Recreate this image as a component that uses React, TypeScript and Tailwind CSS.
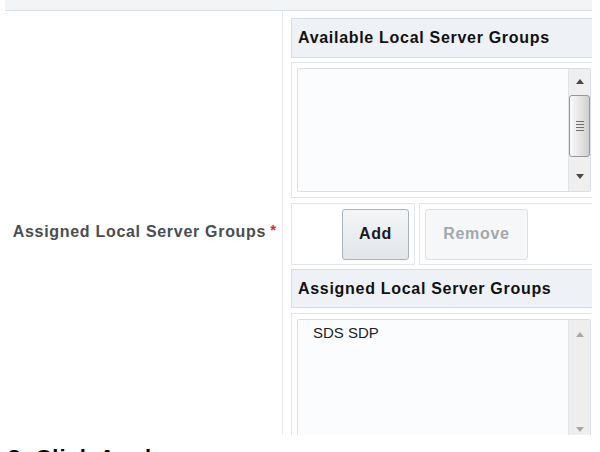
import React from "react";

function Arrow({ dir, color }: { dir: "up" | "down"; color: string }) {
  return (
    <svg width="8" height="5" viewBox="0 0 8 5">
      {dir === "up" ? (
        <polygon points="0,5 8,5 4,0" fill={color} />
      ) : (
        <polygon points="0,0 8,0 4,5" fill={color} />
      )}
    </svg>
  );
}

function ActiveScrollbar() {
  return (
    <div className="w-[22px] h-full bg-[#efefef] border-l border-[#e4e4e4] flex flex-col items-center">
      <div className="h-[24px] flex items-center justify-center pt-[1px]">
        <Arrow dir="up" color="#4a4a4a" />
      </div>
      <div className="mt-[2px] w-[21px] h-[62px] rounded-[3px] border border-[#969696] bg-gradient-to-r from-[#fafafa] via-[#e6e6e6] to-[#cfcfcf] flex flex-col items-center justify-center gap-[2px]">
        <div className="w-[8px] h-[1px] bg-[#707070]" />
        <div className="w-[8px] h-[1px] bg-[#707070]" />
        <div className="w-[8px] h-[1px] bg-[#707070]" />
        <div className="w-[8px] h-[1px] bg-[#707070]" />
      </div>
      <div className="flex-1" />
      <div className="h-[26px] flex items-center justify-center pb-[4px]">
        <Arrow dir="down" color="#4a4a4a" />
      </div>
    </div>
  );
}

function DisabledScrollbar() {
  return (
    <div className="w-[22px] h-full bg-[#eeeeee] border-l border-[#e4e4e4] flex flex-col items-center">
      <div className="h-[26px] flex items-center justify-center pt-[2px]">
        <Arrow dir="up" color="#a8a8a8" />
      </div>
      <div className="flex-1" />
      <div className="h-[26px] flex items-center justify-center">
        <Arrow dir="down" color="#a8a8a8" />
      </div>
    </div>
  );
}

export default function App() {
  const bold = "font-bold text-[16px] tracking-[0.7px]";
  return (
    <div className="w-[600px] h-[452px] bg-white overflow-hidden relative font-['Liberation_Sans',Arial,sans-serif]">
      <div className="ml-[5px] w-[587px] h-[11px] bg-[#f2f4f6] border-b border-[#d8e0e8]" />
      <div className="ml-[5px] w-[587px] h-[424px] overflow-hidden flex">
        <div className="w-[278px] shrink-0 border-r border-[#e6e9ec] flex justify-end items-start pr-[6px] pt-[212px]">
          <span className={`${bold} leading-[18px] text-[#4a4d52]`}>
            Assigned Local Server Groups
          </span>
          <span className="text-[#e3262c] font-bold text-[15px] leading-[14px] ml-[4px]">*</span>
        </div>
        <div className="w-[309px] shrink-0 pl-[8px] flex flex-col">
          <div className="mt-[7px] w-[320px] h-[40px] shrink-0 bg-[#eef2f6] border border-[#d6dde5] flex items-center pl-[6px]">
            <span className={`${bold} text-[#111]`}>Available Local Server Groups</span>
          </div>
          <div className="mt-[4px] w-[320px] h-[136px] shrink-0 border border-[#e2e6ea] p-[5px]">
            <div className="w-[294px] h-[124px] border border-[#d9dee4] rounded-[2px] bg-[#fbfcfe] flex">
              <div className="flex-1" />
              <ActiveScrollbar />
            </div>
          </div>
          <div className="mt-[5px] h-[62px] shrink-0 flex gap-[4px]">
            <div className="w-[124px] shrink-0 h-[62px] border border-[#e2e6ea] flex justify-end items-center pr-[5px]">
              <div className={`w-[67px] h-[51px] rounded-[3px] border border-[#aab3bd] bg-gradient-to-b from-[#f3f5f7] to-[#e2e6ea] flex items-center justify-center ${bold} text-[#1a1a1a]`}>
                Add
              </div>
            </div>
            <div className="w-[200px] shrink-0 h-[62px] border border-[#e2e6ea] flex items-center pl-[5px]">
              <div className={`w-[103px] h-[51px] rounded-[3px] border border-[#dce1e6] bg-[#f6f7f9] flex items-center justify-center ${bold} text-[#a2a8ae]`}>
                Remove
              </div>
            </div>
          </div>
          <div className="mt-[4px] w-[320px] h-[39px] shrink-0 bg-[#eef2f6] border border-[#d6dde5] flex items-center pl-[6px]">
            <span className={`${bold} text-[#111]`}>Assigned Local Server Groups</span>
          </div>
          <div className="mt-[5px] w-[320px] h-[160px] shrink-0 border border-[#e2e6ea] p-[5px]">
            <div className="w-[294px] h-[124px] border border-[#d9dee4] rounded-[2px] bg-[#fbfcfe] flex">
              <div className="flex-1 pl-[15px] pt-[4px] text-[15px] leading-[17px] text-[#222]">
                SDS SDP
              </div>
              <DisabledScrollbar />
            </div>
          </div>
        </div>
      </div>
      <div className="mt-[11px] ml-[8px] font-bold text-[22px] leading-[24px] tracking-[1px] text-black whitespace-nowrap">
        8.  Click Apply.
      </div>
    </div>
  );
}
